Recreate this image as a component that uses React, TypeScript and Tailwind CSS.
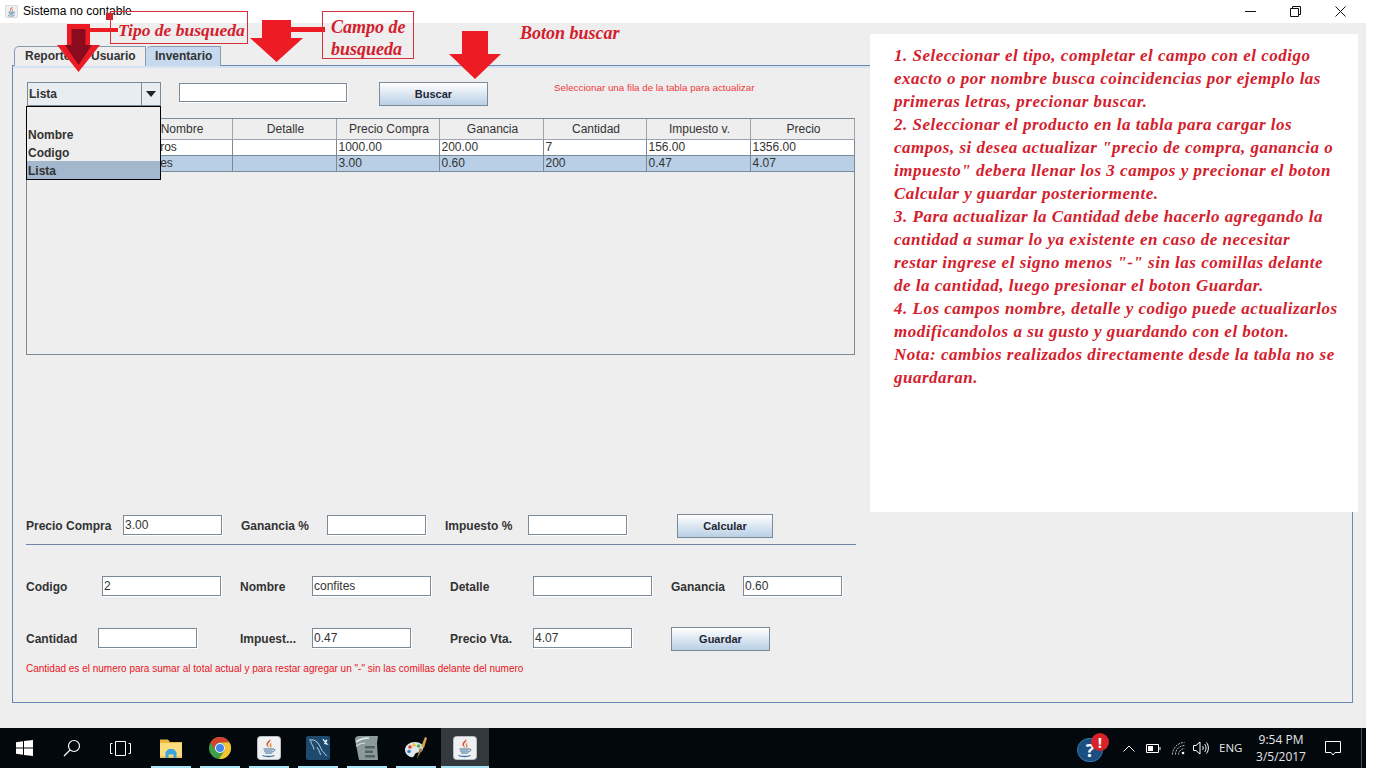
import React from 'react';

const noteLines = [
  '1. Seleccionar el tipo, completar el campo con el codigo',
  'exacto o por nombre busca coincidencias por ejemplo las',
  'primeras letras, precionar buscar.',
  '2. Seleccionar el producto en la tabla para cargar los',
  'campos, si desea actualizar "precio de compra, ganancia o',
  'impuesto" debera llenar los 3 campos y precionar el boton',
  'Calcular y guardar posteriormente.',
  '3. Para actualizar la Cantidad debe hacerlo agregando la',
  'cantidad a sumar lo ya existente en caso de necesitar',
  'restar ingrese el signo menos "-" sin las comillas delante',
  'de la cantidad, luego presionar el boton Guardar.',
  '4. Los campos nombre, detalle y codigo puede actualizarlos',
  'modificandolos a su gusto y guardando con el boton.',
  'Nota: cambios realizados directamente desde la tabla no se',
  'guardaran.',
];

const columns = [
  { name: '', width: 'w-[102px]' },
  { name: 'Nombre', width: 'w-[103px]' },
  { name: 'Detalle', width: 'w-[104px]' },
  { name: 'Precio Compra', width: 'w-[103px]' },
  { name: 'Ganancia', width: 'w-[104px]' },
  { name: 'Cantidad', width: 'w-[103px]' },
  { name: 'Impuesto v.', width: 'w-[104px]' },
  { name: 'Precio', width: 'w-[104px]' },
];

const rows = [
  ['', 'Cigarros', '', '1000.00', '200.00', '7', '156.00', '1356.00'],
  ['', 'confites', '', '3.00', '0.60', '200', '0.47', '4.07'],
];

const script = "font-['Liberation_Serif',serif] italic font-bold text-[#d3202c]";

// Campo de texto estilo Java Metal
const Field = ({ value = '', width, className = '' }: { value?: string; width: string; className?: string }) => (
  <div className={`${width} ${className} h-[20px] shrink-0 bg-white border border-[#7a8a99] shadow-[1px_1px_0_#fff] pl-[1px] text-[12px] leading-[18px] text-[#333]`}>
    {value}
  </div>
);

const Label = ({ text, width, className = '' }: { text: string; width: string; className?: string }) => (
  <div className={`${width} ${className} shrink-0 whitespace-nowrap text-[12px] font-bold text-[#333]`}>{text}</div>
);

const JavaButton = ({ text, width, className = '' }: { text: string; width: string; className?: string }) => (
  <div className={`${width} ${className} h-[24px] shrink-0 flex items-center justify-center border border-[#7a8a99] bg-gradient-to-b from-white to-[#b8cfe5] text-[11px] font-bold text-[#1f2733]`}>
    {text}
  </div>
);

const DownArrow = ({ pos, w, h, shaft, headY, fill = '#ed1c24' }: { pos: string; w: number; h: number; shaft: number; headY: number; fill?: string }) => (
  <svg className={`absolute ${pos}`} width={w} height={h} viewBox={`0 0 ${w} ${h}`}>
    <polygon
      fill={fill}
      points={`${(w - shaft) / 2},0 ${(w + shaft) / 2},0 ${(w + shaft) / 2},${headY} ${w},${headY} ${w / 2},${h} 0,${headY} ${(w - shaft) / 2},${headY}`}
    />
  </svg>
);

const JavaIcon = ({ size }: { size: number }) => (
  <svg width={size} height={size} viewBox="0 0 24 24">
    <rect x="0.5" y="0.5" width="23" height="23" rx="3" fill="#eef0f2" stroke="#b9bfc5" />
    <path d="M13 3c2 2.500-3 4-2 6.500.4 1 1 1.500 1.200 2.500-2-1.500-3.500-3-2.500-5 .7-1.500 3-2.300 3.300-4z" fill="#d8512a" />
    <path d="M15 6.500c-2 1-3 2-2 3.500.4.700.4 1.300 0 2 1.800-1 2-2 1.300-3-.5-.8-.2-1.600.7-2.500z" fill="#e58a2c" />
    <path d="M6.500 13h9.500M7 15h8.500M8 17h7" stroke="#3d6f9c" strokeWidth="1.200" fill="none" />
    <path d="M16 13c2.500-.5 2.500 2.500-.8 3" stroke="#3d6f9c" strokeWidth="1" fill="none" />
    <path d="M5.500 19.500c3 1.300 9 1.300 12 0" stroke="#3d6f9c" strokeWidth="1.300" fill="none" />
  </svg>
);

const TaskItem = ({ children, active = false }: { children: React.ReactNode; active?: boolean }) => (
  <div className={`relative h-full flex items-center justify-center ${active ? 'w-[48px] bg-[#33393d]' : 'w-[49px] pr-px'}`}>
    {children}
    <div className={`absolute bottom-0 h-[2px] bg-[#a8e6f5] ${active ? 'inset-x-0' : 'left-[4px] w-[40px]'}`} />
  </div>
);

const WindowsLogo = () => (
  <svg width="17" height="16" viewBox="0 0 17 16" fill="#fff">
    <polygon points="0,2.300 7,1.300 7,7.500 0,7.500" />
    <polygon points="8,1.100 17,0 17,7.500 8,7.500" />
    <polygon points="0,8.500 7,8.500 7,14.700 0,13.700" />
    <polygon points="8,8.500 17,8.500 17,16 8,14.900" />
  </svg>
);

const FolderIcon = () => (
  <svg width="22" height="20" viewBox="0 0 22 20">
    <path d="M0 1.500h8l2 2.500h12v3H0z" fill="#e8b93c" />
    <path d="M0 5h22v15H0z" fill="#fbdc7e" />
    <path d="M0 18h22v2H0z" fill="#f2c95c" />
    <path d="M5.500 14l3-3h5l3 3v6h-3v-3.500h-5V20h-3z" fill="#3ba5dd" />
  </svg>
);

const ChromeIcon = () => (
  <svg width="22" height="22" viewBox="0 0 22 22">
    <circle cx="11" cy="11" r="11" fill="#3f9f48" />
    <path d="M1.500 5.500A11 11 0 0 1 20.500 5.500H11A5.500 5.500 0 0 0 6 13.500z" fill="#d9412f" />
    <path d="M20.500 5.500A11 11 0 0 1 10 22L15.500 13.500A5.500 5.500 0 0 0 11 5.500z" fill="#f5c433" />
    <circle cx="11" cy="11" r="5" fill="#fff" />
    <circle cx="11" cy="11" r="4" fill="#4a85ec" />
  </svg>
);

const MysqlIcon = () => (
  <svg width="24" height="24" viewBox="0 0 24 24" fill="none">
    <rect width="24" height="24" rx="2" fill="#1e4a70" />
    <path d="M3 4c3-.5 6 0 8 2 2.500 2.500 3.500 6 5 8.500 1 1.500 3 3 4.500 5.500M5 4.500c-.5 2.500 1 4 2 5.500.5 1 .5 2.500 1 3.500M11 11c1.500 3 3 5 3.500 8" stroke="#cfdbe6" strokeWidth="0.900" />
    <path d="M17 3l1.500 2.500L21 4l-1.500 2.500L21 8l-3-.5" stroke="#e8eef3" strokeWidth="1.200" />
  </svg>
);

const ScrollIcon = () => (
  <svg width="24" height="24" viewBox="0 0 24 24">
    <path d="M0 3.500Q0 0 4 0h19l-1 7 1 17H4z" fill="#8d9a9c" />
    <path d="M1 6c4-3 8-4 13-4" stroke="#e9eef0" strokeWidth="1.500" fill="none" />
    <path d="M1 10c3-2 6-3 9-3" stroke="#d6dddf" strokeWidth="1.200" fill="none" />
    <path d="M10 10h10v2.500H10zM10 14.500h8V17h-8zM10 19h10v2.500H10z" fill="#526166" />
  </svg>
);

const PaintIcon = () => (
  <svg width="24" height="24" viewBox="0 0 24 24">
    <path d="M1 14c0-5 5-8 10-8s9 3 8 7-5 3-7 4-1 3-3 4-8-2-8-7z" fill="#dfe8ee" />
    <circle cx="6" cy="11" r="1.800" fill="#e0483e" />
    <circle cx="10" cy="9" r="1.800" fill="#efc23a" />
    <circle cx="14.500" cy="10" r="1.800" fill="#4fb04f" />
    <circle cx="5" cy="15.500" r="1.800" fill="#3f7fd0" />
    <path d="M13 23l2.500-11 3 1z" fill="#a37a3c" />
    <path d="M17 11l4-10 2 1-3 10z" fill="#d9a24a" />
  </svg>
);

const App: React.FC = () => {
  return (
    <div className="relative w-[1376px] h-[768px] overflow-hidden bg-white font-['Liberation_Sans',sans-serif] flex flex-col">
      {/* barra de titulo */}
      <div className="h-[23px] shrink-0 bg-white flex items-center pl-[5px] text-[12px] text-black">
        <JavaIcon size={13} />
        <span className="ml-[5px] -mt-[1px]">Sistema no contable</span>
        <div className="ml-auto flex items-center h-full">
          <svg className="mr-[34px]" width="11" height="11" viewBox="0 0 11 11"><path d="M0 5.500h11" stroke="#111" /></svg>
          <svg className="mr-[34px]" width="11" height="11" viewBox="0 0 11 11" fill="none" stroke="#111"><path d="M.5 2.500h8v8h-8zM2.500 2.500v-2h8v8h-2" /></svg>
          <svg className="mr-[30px]" width="11" height="11" viewBox="0 0 11 11"><path d="M.5.500l10 10M10.500.500l-10 10" stroke="#111" /></svg>
        </div>
      </div>

      <div className="w-[1366px] flex-1 bg-[#eeeeee] pl-[12px] pr-[13px] pt-[23px] flex flex-col">
        {/* pestañas */}
        <div className="flex h-[20px] ml-[2px] -mb-px relative text-[12px] font-bold text-[#333]">
          <div className="w-[132px] bg-[#eeeeee] border border-b-0 border-[#8a9bb0] rounded-tl-[5px] pl-[10px] leading-[18px] whitespace-nowrap">Reporte de Usuario</div>
          <div className="w-[75px] bg-[#c6d9ef] border border-b-0 border-[#8a9bb0] rounded-tl-[5px] pl-[9px] leading-[18px] border-l-0">Inventario</div>
        </div>

        {/* panel principal */}
        <div className="h-[638px] border border-[#6c89b5] pl-[13px] flex flex-col">
          <div className="h-[2px] -ml-[13px] bg-[#d5e2f0] shrink-0" />
          <div className="flex items-start mt-[14px] h-[24px]">
            <div className="relative w-[134px] h-[24px] ml-px shrink-0">
              <div className="h-full flex border border-[#7a8a99] bg-[#e8edf2] text-[12px] font-bold text-[#333]">
                <div className="flex-1 pl-[1px] leading-[22px] border-r border-[#7a8a99]">Lista</div>
                <div className="w-[18px] flex items-center justify-center">
                  <svg width="10" height="6" viewBox="0 0 10 6"><polygon points="0,0 10,0 5,6" fill="#222" /></svg>
                </div>
              </div>
              {/* desplegable abierto */}
              <div className="absolute z-10 top-full -left-px w-[135px] h-[74px] bg-[#eeeeee] border border-black flex flex-col justify-end text-[12px] font-bold text-[#333]">
                <div className="h-[18px] pl-[1px] leading-[20px]">Nombre</div>
                <div className="h-[18px] pl-[1px] leading-[20px]">Codigo</div>
                <div className="h-[18px] pl-[1px] leading-[20px] bg-[#a3b8cc]">Lista</div>
              </div>
            </div>
            <div className="w-[168px] h-[19px] mt-px ml-[18px] bg-white border border-[#7a8a99] shadow-[1px_1px_0_#fff]" />
            <JavaButton text="Buscar" width="w-[109px]" className="ml-[32px]" />
            <div className="ml-[66px] mt-[-1px] text-[9.800px] text-[#ee3b3b] whitespace-nowrap">Seleccionar una fila de la tabla para actualizar</div>
          </div>

          {/* tabla */}
          <div className="w-[829px] h-[237px] mt-[12px] border border-[#7a8a99]">
            <table className="table-fixed border-collapse w-[827px] text-[12px] text-[#333]">
              <thead>
                <tr className="h-[20px] bg-[#eeeeee]">
                  {columns.map((col) => (
                    <th key={col.name} className={`${col.width} p-0 pl-[3px] font-normal text-center border-r border-b border-[#9aa5b1]`}>{col.name}</th>
                  ))}
                </tr>
              </thead>
              <tbody>
                {rows.map((row, i) => (
                  <tr key={i} className={`h-[16px] ${i === 1 ? 'bg-[#b8cfe5]' : 'bg-white'}`}>
                    {row.map((cell, j) => (
                      <td key={j} className="p-0 pl-[2px] leading-[14px] border-r border-b border-[#7a8a99]">{cell}</td>
                    ))}
                  </tr>
                ))}
              </tbody>
            </table>
          </div>

          {/* formulario */}
          <div className="flex items-start h-[24px] mt-[159px] leading-[24px]">
            <Label text="Precio Compra" width="w-[97px]" />
            <Field value="3.00" width="w-[99px]" className="mt-px" />
            <Label text="Ganancia %" width="w-[86px]" className="ml-[19px]" />
            <Field width="w-[99px]" className="mt-px" />
            <Label text="Impuesto  %" width="w-[83px]" className="ml-[19px]" />
            <Field width="w-[99px]" className="mt-px" />
            <JavaButton text="Calcular" width="w-[96px]" className="ml-[50px]" />
          </div>
          <div className="w-[830px] h-px mt-[6px] bg-[#6f86a3]" />
          <div className="flex items-start h-[20px] mt-[31px] leading-[22px]">
            <Label text="Codigo" width="w-[76px]" />
            <Field value="2" width="w-[119px]" />
            <Label text="Nombre" width="w-[72px]" className="ml-[19px]" />
            <Field value="confites" width="w-[119px]" />
            <Label text="Detalle" width="w-[83px]" className="ml-[19px]" />
            <Field width="w-[119px]" />
            <Label text="Ganancia" width="w-[72px]" className="ml-[19px]" />
            <Field value="0.60" width="w-[99px]" />
          </div>
          <div className="flex items-start h-[24px] mt-[31px] leading-[24px]">
            <Label text="Cantidad" width="w-[72px]" />
            <Field width="w-[99px]" className="mt-px" />
            <Label text="Impuest..." width="w-[72px]" className="ml-[43px]" />
            <Field value="0.47" width="w-[99px]" className="mt-px" />
            <Label text="Precio Vta." width="w-[83px]" className="ml-[39px]" />
            <Field value="4.07" width="w-[99px]" className="mt-px" />
            <JavaButton text="Guardar" width="w-[99px]" className="ml-[39px]" />
          </div>
          <div className="mt-[12px] text-[10px] leading-[12px] text-[#e8141c] whitespace-nowrap">
            Cantidad es el numero para sumar al total actual y para restar agregar un "-" sin las comillas delante del numero
          </div>
        </div>
      </div>

      {/* barra de tareas */}
      <div className="w-[1366px] h-[40px] shrink-0 bg-[#03080d] flex items-center text-white">
        <div className="w-[48px] h-full flex items-center justify-center"><WindowsLogo /></div>
        <div className="w-[48px] h-full flex items-center justify-center">
          <svg width="18" height="18" viewBox="0 0 18 18" fill="none" stroke="#fff" strokeWidth="1.200">
            <circle cx="11" cy="7" r="5.500" />
            <path d="M7 11l-6 6" />
          </svg>
        </div>
        <div className="w-[48px] h-full flex items-center justify-center">
          <svg width="21" height="15" viewBox="0 0 21 15" fill="none" stroke="#fff">
            <path d="M5.500.500h10v14h-10zM2.500 2.500h-2v10h2M18.500 2.500h2v10h-2" />
          </svg>
        </div>
        <div className="ml-[3px] h-full flex">
          <TaskItem><FolderIcon /></TaskItem>
          <TaskItem><ChromeIcon /></TaskItem>
          <TaskItem><JavaIcon size={24} /></TaskItem>
          <TaskItem><MysqlIcon /></TaskItem>
          <TaskItem><ScrollIcon /></TaskItem>
          <TaskItem><PaintIcon /></TaskItem>
          <TaskItem active><JavaIcon size={24} /></TaskItem>
        </div>

        {/* bandeja del sistema */}
        <div className="ml-auto h-full flex items-center font-['Open_Sans',sans-serif]">
          <div className="relative w-[26px] h-[24px] mt-[4px] rounded-full bg-[#1a4f80] border border-[#2f7ab5] flex items-center justify-center text-[18px] font-bold leading-none">
            ?
            <div className="absolute -top-[6px] left-[13px] w-[18px] h-[18px] rounded-full bg-[#d8232a] flex items-center justify-center text-[15px] font-bold">!</div>
          </div>
          <svg className="ml-[20px]" width="12" height="7" viewBox="0 0 12 7" fill="none" stroke="#fff"><path d="M.5 6.500L6 1l5.500 5.500" /></svg>
          <svg className="ml-[11px]" width="15" height="9" viewBox="0 0 15 9" fill="none" stroke="#fff">
            <path d="M.5.500h12v8H.5zM14 3v3" />
            <rect x="2" y="2" width="5" height="5" fill="#fff" stroke="none" />
          </svg>
          <svg className="ml-[11px]" width="13" height="13" viewBox="0 0 13 13" fill="none" stroke="#b9bdc0">
            <path d="M.5 12.500C.5 6 6 .5 12.500.5M3.500 12.500c0-5 4-9 9-9M6.500 12.500c0-3 3-6 6-6" strokeDasharray="2 1" />
            <circle cx="11" cy="11" r="1.300" fill="#fff" stroke="none" />
          </svg>
          <svg className="ml-[8px]" width="16" height="14" viewBox="0 0 16 14" fill="none" stroke="#fff">
            <path d="M.5 4.500h2.500L7 1v12L3 9.500H.5zM9.500 5c1 1 1 3 0 4M11.500 3c2 2 2 6 0 8M13.500 1.500c2.500 3 2.500 8 0 11" />
          </svg>
          <div className="ml-[10px] w-[24px] text-[11.500px] text-[#e6e6e6]">ENG</div>
          <div className="ml-[19px] w-[38px] flex flex-col items-center text-[12px] leading-[17px] text-[#e6e6e6] whitespace-nowrap">
            <span>9:54 PM</span>
            <span>3/5/2017</span>
          </div>
          <svg className="ml-[25px]" width="16" height="15" viewBox="0 0 16 15" fill="none" stroke="#fff">
            <path d="M.5.500h15v11H10L8 14l-2-2.500H.5z" />
          </svg>
          <div className="ml-[20px] mr-[4px] w-px h-full bg-[#4a5055]" />
        </div>
      </div>

      {/* anotaciones en rojo sobre la captura */}
      <DownArrow pos="left-[57px] top-[24px]" w={43} h={48} shaft={23} headY={21} />
      <DownArrow pos="left-[65px] top-[29px]" w={27} h={36} shaft={14} headY={16} fill="#8a0a1e" />
      <div className="absolute left-[88px] top-[28px] w-[30px] h-[4px] bg-[#ed1c24]" />
      <div className="absolute left-[106px] top-[13px] w-[7px] h-[7px] bg-[#d3202c]" />
      <DownArrow pos="left-[250px] top-[20px]" w={53} h={42} shaft={29} headY={18} />
      <div className="absolute left-[291px] top-[27px] w-[34px] h-[5px] bg-[#ed1c24]" />
      <DownArrow pos="left-[449px] top-[31px]" w={52} h={48} shaft={26} headY={23} />

      <div className={`${script} absolute left-[110px] top-[11px] w-[138px] h-[33px] border border-[#d3303c] pl-[7px] text-[17.500px] leading-[36px] whitespace-nowrap`}>
        Tipo de busqueda
      </div>
      <div className={`${script} absolute left-[322px] top-[11px] w-[92px] h-[48px] border border-[#d3303c] pl-[8px] pt-[4px] text-[18px] leading-[22px] whitespace-nowrap`}>
        <div>Campo de</div>
        <div>busqueda</div>
      </div>
      <div className={`${script} absolute left-[520px] top-[22px] text-[18px] leading-[22px] whitespace-nowrap`}>Boton buscar</div>

      <div className={`${script} absolute left-[870px] top-[34px] w-[488px] h-[478px] bg-white pl-[24px] pt-[10px] text-[17px] leading-[23px] tracking-[0.5px]`}>
        {noteLines.map((line) => (
          <div key={line} className="whitespace-nowrap">{line}</div>
        ))}
      </div>
    </div>
  );
};

export default App;
